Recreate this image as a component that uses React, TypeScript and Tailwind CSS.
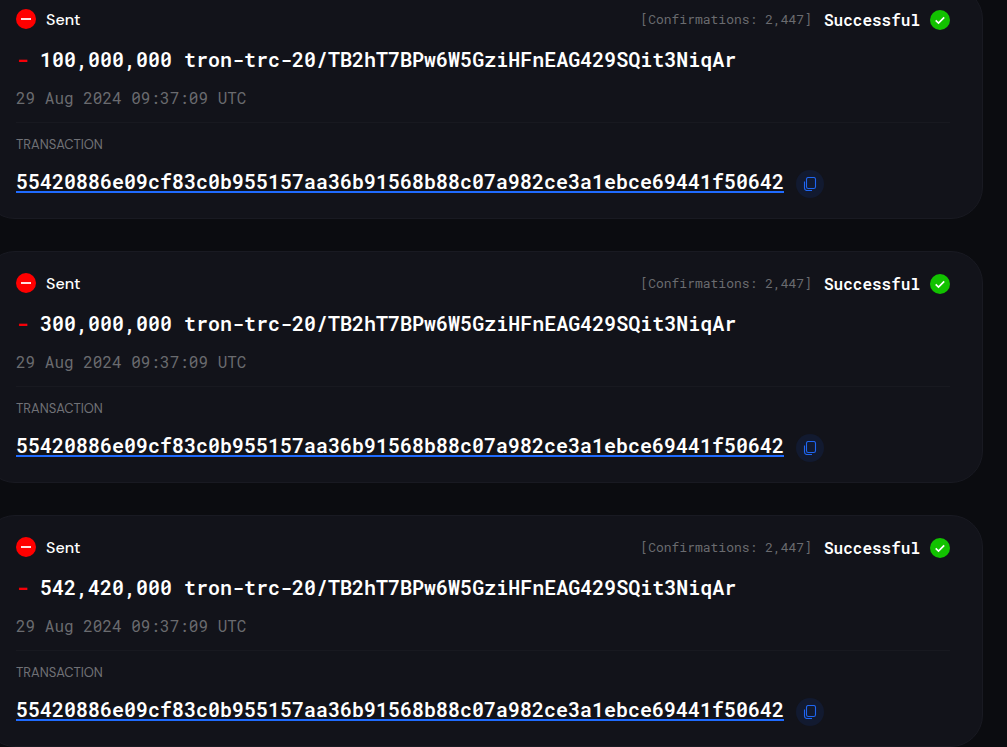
const HASH = "55420886e09cf83c0b955157aa36b91568b88c07a982ce3a1ebce69441f50642";
const TOKEN = "tron-trc-20/TB2hT7BPw6W5GziHFnEAG429SQit3NiqAr";

const transfers = ["100,000,000", "300,000,000", "542,420,000"];

function SentIcon() {
  return (
    <svg viewBox="0 0 20 20" className="size-5 shrink-0" aria-hidden="true">
      <circle cx="10" cy="10" r="10" fill="#ff0000" />
      <rect x="5" y="9" width="10" height="2" fill="#ffe0e0" />
    </svg>
  );
}

function SuccessIcon() {
  return (
    <svg viewBox="0 0 20 20" className="size-5 shrink-0" aria-hidden="true">
      <circle cx="10" cy="10" r="10" fill="#12c200" />
      <path d="M5.7 10.4 8.5 13 14.2 7.4" fill="none" stroke="#fff" strokeWidth="1.7" />
    </svg>
  );
}

function CopyIcon() {
  return (
    <svg viewBox="0 0 14 14" className="size-3.5" fill="none" stroke="#1f66f2" aria-hidden="true">
      <rect x="3.5" y="0.5" width="9" height="11" rx="1.8" strokeWidth="1.1" />
      <path d="M1.5 4.5v6.5a2.5 2.5 0 0 0 2.5 2.5h5" strokeWidth="1.1" />
    </svg>
  );
}

function TransferCard({ amount }: { amount: string }) {
  return (
    <article className="rounded-[32px] border border-[#191a22] bg-[#12131a] px-8 py-5">
      <header className="flex h-6 items-start justify-between">
        <div className="flex items-start gap-2.5">
          <span className="flex h-[22px] items-center">
            <SentIcon />
          </span>
          <span className="font-['DM_Sans','Inter',sans-serif] leading-6 font-medium">Sent</span>
        </div>
        <div className="flex items-start">
          <span className="text-[13px] leading-[22px] text-[#6a6b6f]">[Confirmations: 2,447]</span>
          <span className="ml-3 leading-6 font-semibold">Successful</span>
          <span className="ml-2.5 flex h-6 items-center">
            <SuccessIcon />
          </span>
        </div>
      </header>
      <p className="mt-3 text-xl leading-[30px] font-semibold whitespace-nowrap">
        <span className="font-bold text-[#f50008]">-</span> {amount} {TOKEN}
      </p>
      <p className="mt-3 leading-6 text-[#6a6b6f]">29 Aug 2024 09:37:09 UTC</p>
      <hr className="mt-3 border-[#181920]" />
      <h3 className="mt-3 font-['DM_Sans','Inter',sans-serif] text-[13px] leading-5 text-[#707176]">TRANSACTION</h3>
      <div className="mt-[15px] flex items-start gap-3">
        <a href="#transaction" className="border-b-2 border-[#1f6bff] pt-px text-xl leading-5 font-semibold">
          {HASH}
        </a>
        <button
          type="button"
          aria-label="Copy transaction hash"
          className="flex size-7 shrink-0 items-center justify-center rounded-full bg-[#121a30]"
        >
          <CopyIcon />
        </button>
      </div>
    </article>
  );
}

export default function App() {
  return (
    <main className="min-h-screen overflow-hidden bg-[#0b0c10] font-['Roboto_Mono','Liberation_Mono',monospace] text-base text-white">
      <div className="-mt-[13px] mr-6 -ml-[17px] flex flex-col gap-8">
        {transfers.map((amount) => (
          <TransferCard key={amount} amount={amount} />
        ))}
      </div>
    </main>
  );
}
